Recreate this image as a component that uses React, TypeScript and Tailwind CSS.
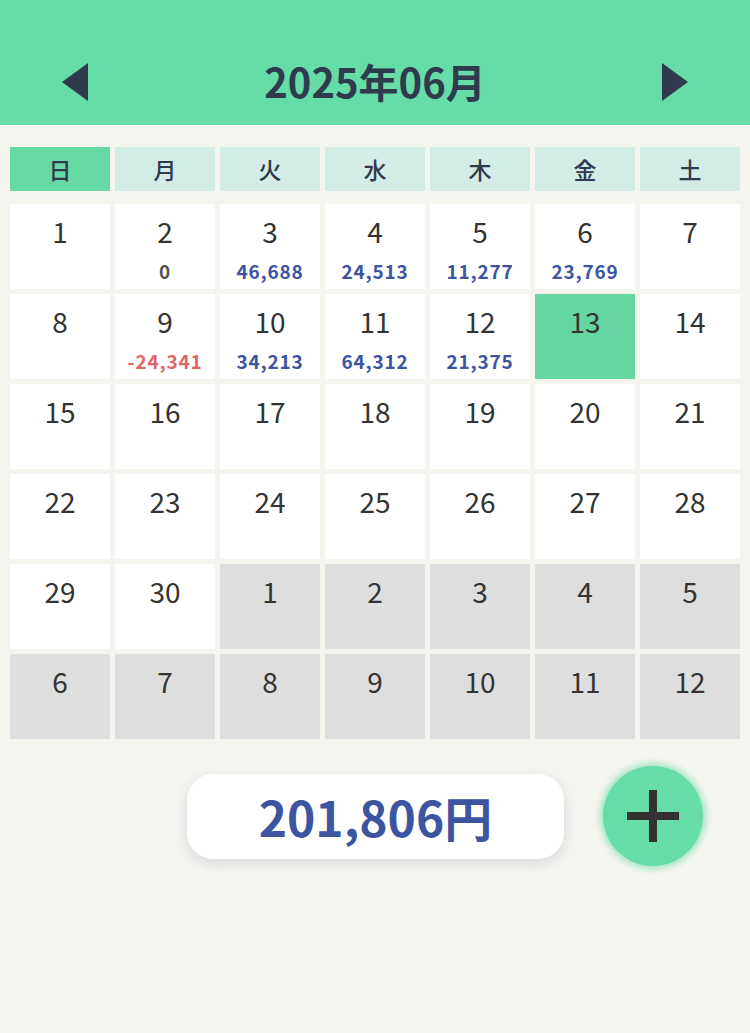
import React from 'react';

type Cell = { day: number; amount?: number; outside?: boolean; today?: boolean };

const amounts: Record<number, number> = {
  2: 0,
  3: 46688,
  4: 24513,
  5: 11277,
  6: 23769,
  9: -24341,
  10: 34213,
  11: 64312,
  12: 21375,
};

const weekdays = ['日', '月', '火', '水', '木', '金', '土'];

function buildCells(): Cell[] {
  const cells: Cell[] = [];
  for (let d = 1; d <= 30; d++) {
    cells.push({ day: d, amount: amounts[d], today: d === 13 });
  }
  for (let d = 1; d <= 12; d++) cells.push({ day: d, outside: true });
  return cells;
}

const AmountText: React.FC<{ value: number }> = ({ value }) => {
  const color = value < 0 ? 'text-[#e06767]' : value === 0 ? 'text-[#555555]' : 'text-[#3d55a0]';
  const text = value < 0 ? '-' + Math.abs(value).toLocaleString('en-US') : value.toLocaleString('en-US');
  return <div className={`text-[19px] font-bold leading-none mt-[16px] tracking-[0.8px] ${color}`}>{text}</div>;
};

export default function App() {
  const cells = buildCells();
  return (
    <div
      className="w-[750px] h-[1033px] bg-[#f5f5f0] flex flex-col"
      style={{ fontFamily: '"Noto Sans CJK JP", "Noto Sans", sans-serif' }}
    >
      {/* Header */}
      <div className="h-[125px] bg-[#66dca8] flex items-end justify-between px-[62px] pb-[24px]">
        <svg width="26" height="38" viewBox="0 0 26 38">
          <polygon points="26,0 26,38 0,19" fill="#2f3b4c" />
        </svg>
        <h1 className="text-[40px] font-bold text-[#2f3b4c] leading-none">2025年06月</h1>
        <svg width="26" height="38" viewBox="0 0 26 38">
          <polygon points="0,0 0,38 26,19" fill="#2f3b4c" />
        </svg>
      </div>

      {/* Weekdays */}
      <div className="grid grid-cols-7 gap-[5px] px-[10px] mt-[22px]">
        {weekdays.map((w, i) => (
          <div
            key={w}
            className={`h-[44px] flex items-center justify-center text-[23px] font-medium text-[#2f3b4c] ${
              i === 0 ? 'bg-[#66d9a5]' : 'bg-[#d4ece6]'
            }`}
          >
            {w}
          </div>
        ))}
      </div>

      {/* Days */}
      <div className="grid grid-cols-7 gap-[5px] px-[10px] mt-[13px]">
        {cells.map((c, i) => (
          <div
            key={i}
            className={`h-[85px] flex flex-col items-center pt-[13px] ${
              c.today ? 'bg-[#66d6a2]' : c.outside ? 'bg-[#dedede]' : 'bg-white'
            }`}
          >
            <div className="text-[28px] leading-none font-normal text-[#333333]">{c.day}</div>
            {c.amount !== undefined && <AmountText value={c.amount} />}
          </div>
        ))}
      </div>

      {/* Total + add */}
      <div className="flex items-center mt-[27px]">
        <div className="ml-[187px] w-[377px] h-[85px] bg-white rounded-[26px] shadow-[0_4px_14px_rgba(120,130,160,0.25)] flex items-center justify-center">
          <span className="text-[48px] font-bold text-[#3d55a0] leading-none">201,806円</span>
        </div>
        <button className="ml-[39px] w-[100px] h-[100px] rounded-full bg-[#66dca8] shadow-[0_0_6px_3px_rgba(102,220,168,0.6)] flex items-center justify-center">
          <svg width="52" height="52" viewBox="0 0 52 52">
            <rect x="22" y="0" width="8" height="52" fill="#333333" />
            <rect x="0" y="22" width="52" height="8" fill="#333333" />
          </svg>
        </button>
      </div>
    </div>
  );
}
